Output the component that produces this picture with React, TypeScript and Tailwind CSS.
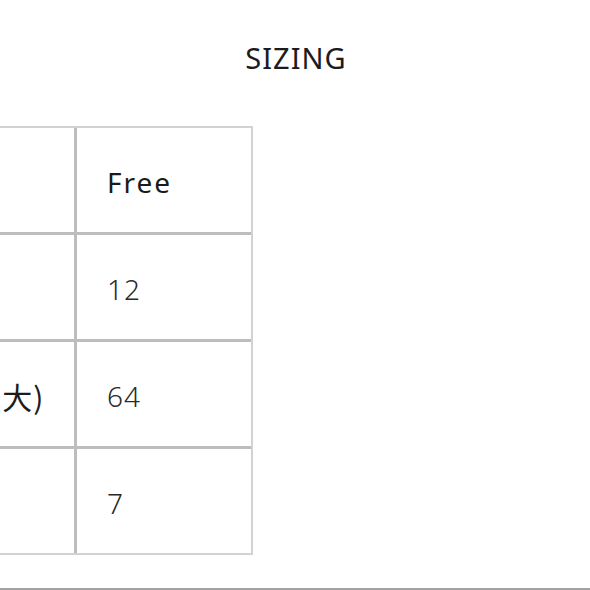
export default function App() {
  const rows = [
    { label: "尺码", value: "Free", strong: true },
    { label: "衣长", value: "12", strong: false },
    { label: "胸围(最大)", value: "64", strong: false },
    { label: "袖长", value: "7", strong: false },
  ];
  const cells: React.ReactNode[] = [];
  rows.forEach((r, i) => {
    if (i > 0) cells.push(<div key={`s${i}`} className="h-[3px] bg-[#bdbdbd]" />);
    cells.push(
      <div key={i} className="flex h-[104px]">
        <div
          className="w-[251px] border-r-[3px] border-[#bdbdbd] pl-[72px] pt-[39px] text-[30px] leading-none whitespace-nowrap text-[#1c1c1c] tracking-[1px]"
          style={{ fontFamily: '"Noto Sans CJK SC", sans-serif' }}
        >
          {r.label}
        </div>
        <div
          className={`flex-1 pl-[30px] pt-[40px] text-[28px] leading-none whitespace-nowrap ${
            r.strong ? "tracking-[2px] text-[#1a1a1a]" : "tracking-[1px] font-light text-[#2a2a2a]"
          }`}
        >
          {r.value}
        </div>
      </div>
    );
  });
  return (
    <div
      className="w-[590px] h-[590px] overflow-hidden bg-white text-[#1c1c1c]"
      style={{ fontFamily: '"Noto Sans", "Noto Sans CJK SC", sans-serif' }}
    >
      <div className="h-[126px] pt-[43px] flex justify-center">
        <div className="text-[29px] leading-none tracking-[1px] pl-[2px]">SIZING</div>
      </div>
      <div className="ml-[-176px] w-[429px] border-[2px] border-[#d2d2d2] flex flex-col">{cells}</div>
      <div className="mt-[33px] h-[2px] bg-[#a3a3a3]" />
    </div>
  );
}
